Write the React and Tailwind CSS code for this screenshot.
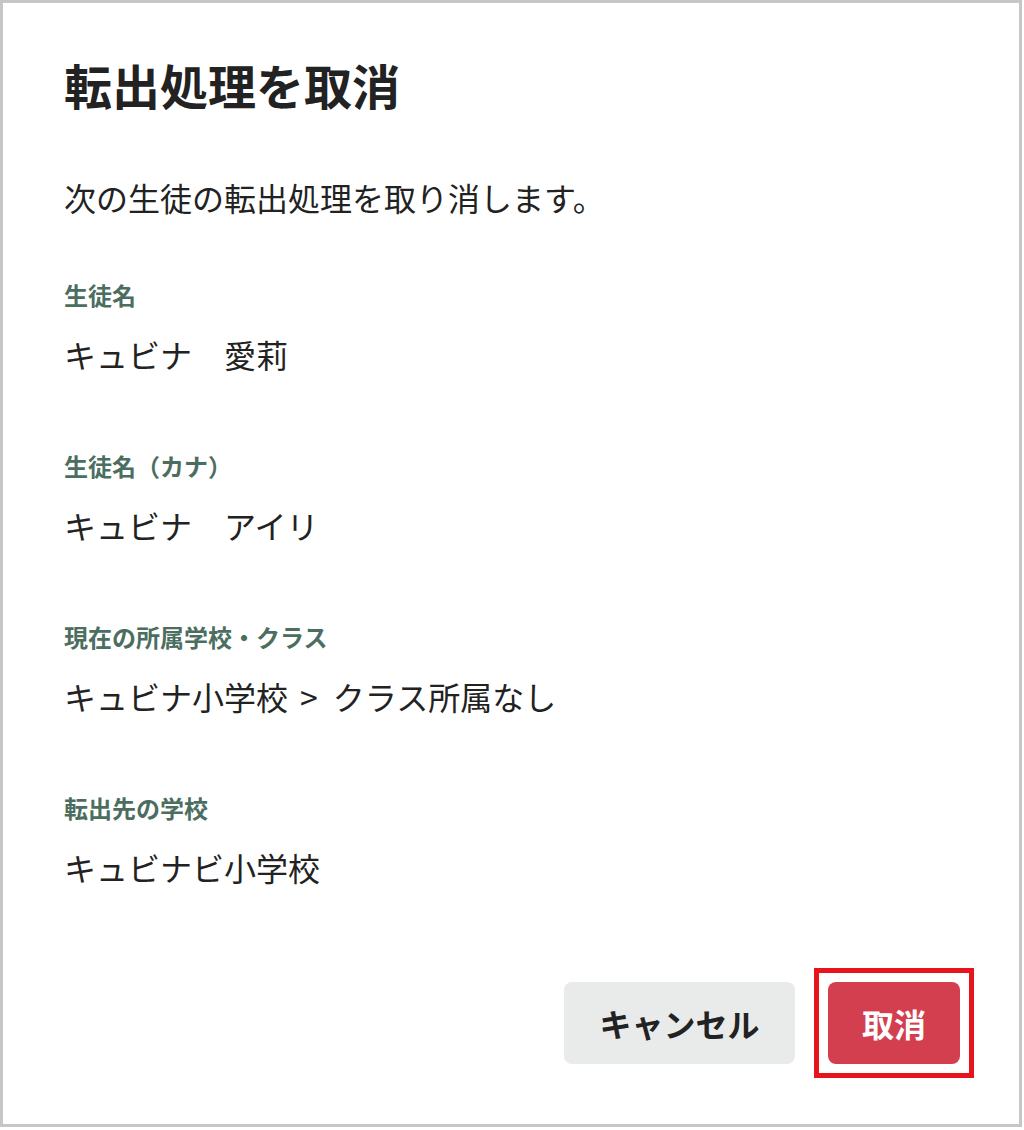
import React from "react";

const rows = [
  { label: "生徒名", value: "キュビナ　愛莉" },
  { label: "生徒名（カナ）", value: "キュビナ　アイリ" },
  {
    label: "現在の所属学校・クラス",
    value: (
      <>
        キュビナ小学校<span className="ml-[12px] mr-[15px]">&gt;</span>クラス所属なし
      </>
    ),
  },
  { label: "転出先の学校", value: "キュビナビ小学校" },
];

const App = () => {
  return (
    <div className="w-[1022px] h-[1127px] bg-white border-[3px] border-[#c6c6c6] font-['Noto_Sans_CJK_JP','Noto_Sans_CJK_SC',sans-serif] text-[#222]">
      <div className="pl-[61px] pt-[53px]">
        <h1 className="text-[48px] leading-[56px] font-bold text-[#222]">転出処理を取消</h1>
        <p className="mt-[61px] text-[32px] leading-[48px]">次の生徒の転出処理を取り消します。</p>
        <div className="mt-[56px]">
          {rows.map((row, idx) => (
            <div key={row.label} className={idx === 0 ? "" : "mt-[70px]"}>
              <div className="text-[24px] leading-[36px] font-bold text-[#4b6e60]">{row.label}</div>
              <div className="mt-[17px] text-[32px] leading-[48px]">{row.value}</div>
            </div>
          ))}
        </div>
      </div>
      {/* ボタン */}
      <div className="mt-[77px] flex items-center justify-end pr-[45px]">
        <button className="w-[231px] h-[82px] rounded-[8px] bg-[#e9ebea] text-[32px] font-bold text-[#222]">
          キャンセル
        </button>
        <div className="ml-[19px] border-[5px] border-[#e8141c] p-[9px]">
          <button className="w-[132px] h-[82px] rounded-[8px] bg-[#d43f50] text-[32px] font-bold text-white block">
            取消
          </button>
        </div>
      </div>
    </div>
  );
};

export default App;
